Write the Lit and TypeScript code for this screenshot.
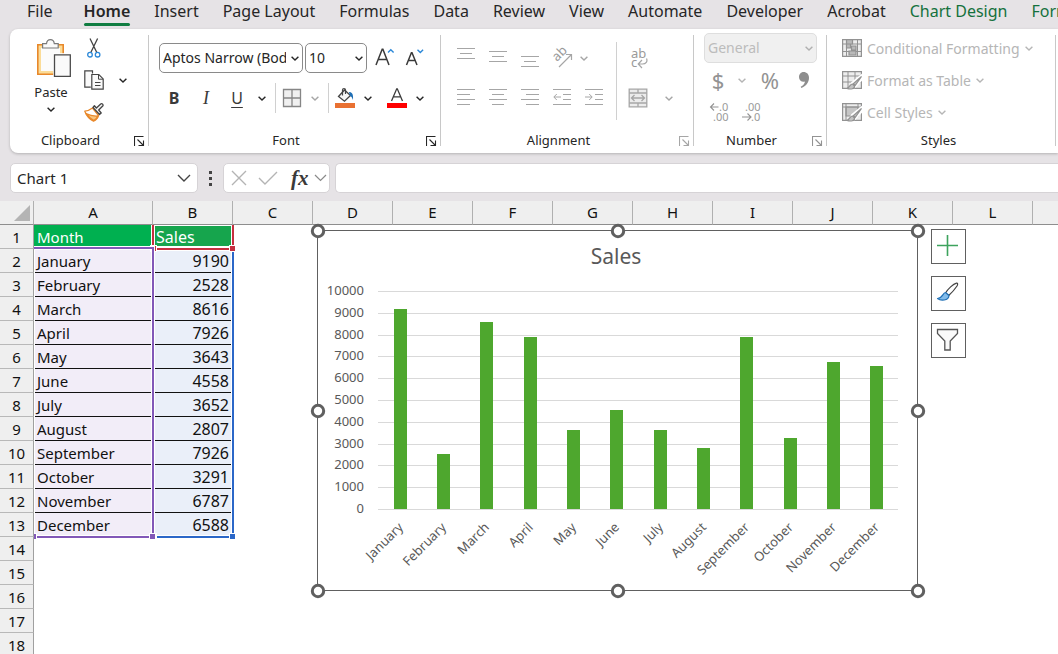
import { LitElement, html, svg, css, nothing } from "lit";
import { customElement } from "lit/decorators.js";

const SALES: [string, number][] = [
  ["January", 9190],
  ["February", 2528],
  ["March", 8616],
  ["April", 7926],
  ["May", 3643],
  ["June", 4558],
  ["July", 3652],
  ["August", 2807],
  ["September", 7926],
  ["October", 3291],
  ["November", 6787],
  ["December", 6588],
];

const base = css`
  * {
    box-sizing: border-box;
  }
  :host {
    display: block;
    font-family: "Noto Sans", "Open Sans", sans-serif;
    color: #262626;
  }
  button {
    font: inherit;
    color: inherit;
    background: none;
    border: 0;
    padding: 0;
    margin: 0;
    display: flex;
    align-items: center;
    justify-content: center;
  }
  svg {
    display: block;
    flex: none;
  }
`;

const chevron = () => svg`
  <svg width="8" height="5" viewBox="0 0 8 5" fill="none" stroke="currentColor" stroke-width="1.4">
    <path d="M.6 .7 4 4 7.4 .7"/>
  </svg>`;

const drop = (label: string, disabled = false) => html`
  <button class="drop" aria-label=${label} ?disabled=${disabled}>${chevron()}</button>`;

const lines = (rows: [number, number, number][]) => html`
  <svg width="18" height="20" viewBox="0 0 18 20" stroke="currentColor" stroke-width="1">
    ${rows.map(([x1, x2, y]) => svg`<path d="M${x1} ${y}.5H${x2}"/>`)}
  </svg>`;

const icons = {
  paste: html`
    <svg width="34" height="38" viewBox="0 0 34 38">
      <path d="M.8 5.8h25.4v29.4H.8z" fill="#fbdc98" stroke="#e8882a" stroke-width="1.6"/>
      <path d="M4 9h19v23H4z" fill="#fbfbfb"/>
      <path d="M5.6 9V4.6h3.9C9.8 2 11.3.6 13.4.6s3.6 1.4 3.9 4h3.9V9z" fill="#fafafa" stroke="#7a7a7a" stroke-width="1.2"/>
      <path d="M16.2 14.2h18v24h-18z" fill="#fff"/>
      <path d="M17.5 15.8h15.8v21.5H17.5z" fill="#fafafa" stroke="#4a4a4a" stroke-width="1.3"/>
    </svg>`,
  cut: html`
    <svg width="20" height="20" viewBox="0 0 20 20" fill="none" stroke-width="1.3">
      <path d="M6 .5l6.8 14M13.6 .5l-6.8 14" stroke="#444"/>
      <circle cx="6" cy="16.7" r="2.3" stroke="#2b88d8"/>
      <circle cx="13.6" cy="16.7" r="2.3" stroke="#2b88d8"/>
    </svg>`,
  copy: html`
    <svg width="20" height="20" viewBox="0 0 20 20" fill="#fafafa" stroke="#444" stroke-width="1.2">
      <path d="M8.5 3.5V.8H.8v16.4h6"/>
      <path d="M7.8 4.5h7l4.4 4.4v10.3H7.8z"/>
      <path d="M14.5 4.7v4.5h4.5M11 12.5h5.5M11 15.5h5.5" fill="none" stroke-width="1"/>
    </svg>`,
  painter: html`
    <svg width="20" height="20" viewBox="0 0 20 20" stroke-width="1.3" stroke-linejoin="round">
      <path d="M8.5 6C6.5 7.5 4 9 .8 9.2c1.7 4.5 4.7 8 8.7 9.9 2.6-1.2 4.4-3.4 5-5.6z" fill="#fff" stroke="#e8882a"/>
      <path d="M2 11.5c2.500 3 5 5.700 7.800 7 2-1 3.500-2.800 4-4.500-4 .3-8-.5-11.800-2.500z" fill="#f7c47e" stroke="#e8882a"/>
      <path d="M9 5.500l6.500 7 1.700-1.500-2.500-3 4-4c1-1.200-.6-3-2-2l-4.300 4-2-2.300z" fill="#f3f3f3" stroke="#444"/>
    </svg>`,
  grow: html`
    <svg width="20" height="20" viewBox="0 0 20 20" fill="none">
      <path d="M1 17 7.200 1.300h.7L14 17M3.200 11.500h8.700" stroke="#3a3a3a" stroke-width="1.5"/>
      <path d="M13 4.500l2.800-2.800 2.800 2.800" stroke="#2b88d8" stroke-width="1.4"/>
    </svg>`,
  shrink: html`
    <svg width="20" height="20" viewBox="0 0 20 20" fill="none">
      <path d="M1.500 17 6.400 4.800h.6L12 17M3.400 12.600h6.800" stroke="#3a3a3a" stroke-width="1.5"/>
      <path d="M12.500 1.700l2.800 2.800 2.800-2.800" stroke="#2b88d8" stroke-width="1.4"/>
    </svg>`,
  borders: html`
    <svg width="20" height="20" viewBox="0 0 20 20">
      <path d="M1.500 1.500h17v17h-17zM10 1.500v17M1.500 10h17" fill="#f0f0f0" stroke="#868686" stroke-width="1.3"/>
    </svg>`,
  fill: html`
    <svg width="20" height="20" viewBox="0 0 20 20" fill="none">
      <path d="M3.500 8.500 9.500 2l6 5.500-6 5.700z" fill="#f6f6f6" stroke="#444" stroke-width="1.3"/>
      <path d="M7.500 7.500V2c0-1.800 3-1.800 3 0v4" stroke="#444" stroke-width="1.2"/>
      <path d="M14 4c3 0 4.500 2 4 8-.9-2.500-1.500-3.500-3-4z" fill="#1f6fb5"/>
      <path d="M0 15h20v5H0z" fill="#e97132"/>
    </svg>`,
  fontColor: html`
    <svg width="20" height="20" viewBox="0 0 20 20" fill="none">
      <path d="M4.500 13 9.700 .8h.6L15.500 13M6.500 8.800h7" stroke="#3a3a3a" stroke-width="1.3"/>
      <path d="M0 15h20v5H0z" fill="#f00"/>
    </svg>`,
  orientation: html`
    <svg width="22" height="22" viewBox="0 0 22 22" fill="none" stroke="currentColor" stroke-width="1.2">
      <text class="glyph" transform="translate(6 15) rotate(-45)" font-size="13">ab</text>
      <path d="M8 20 20 8M15 7.500h5.500V13"/>
    </svg>`,
  wrap: html`
    <svg width="20" height="22" viewBox="0 0 20 22" fill="none" stroke="currentColor" stroke-width="1.2">
      <text class="glyph" x="3" y="11" font-size="13">ab</text>
      <text class="glyph" x="3" y="20" font-size="13">c</text>
      <path d="M18.500 11.500c1.300 3-.5 5.500-4 5.500H11M14 13 10.200 17l3.800 4"/>
    </svg>`,
  outdent: html`
    <svg width="20" height="20" viewBox="0 0 20 20" fill="none" stroke="currentColor">
      <path d="M1 1.500h18M11 6.500h8M11 11.500h8M1 16.500h18"/>
      <path d="M9 9H2M4.800 6 1.800 9l3 3"/>
    </svg>`,
  indent: html`
    <svg width="20" height="20" viewBox="0 0 20 20" fill="none" stroke="currentColor">
      <path d="M1 1.500h18M11 6.500h8M11 11.500h8M1 16.500h18"/>
      <path d="M1 9h7M5.200 6l3 3-3 3"/>
    </svg>`,
  merge: html`
    <svg width="20" height="20" viewBox="0 0 20 20" fill="none" stroke="currentColor" stroke-width="1.3">
      <path d="M1.200 1.200h17.600v17.600H1.200z" fill="#ececec"/>
      <path d="M1.200 5h17.600M1.200 15h17.600M10 1.200V5M10 15v3.800"/>
      <path d="M3.500 10h13M6.500 7l-3 3 3 3M13.500 7l3 3-3 3"/>
    </svg>`,
  comma: html`
    <svg width="12" height="18" viewBox="0 0 12 18">
      <path d="M5.500 1C8.800 1 11 3.300 11 6.800c0 4.700-3 8.600-7.700 10.200l-.6-1.200c2.500-1.200 4-3 4.300-5.200-3.300.8-6-1.200-6-4.400C1 3.200 3 1 5.500 1z" fill="#8e8e8e"/>
    </svg>`,
  moreDecimals: html`
    <svg width="22" height="22" viewBox="0 0 22 22" fill="none" stroke="currentColor" stroke-width="1.1">
      <text class="glyph" x="10" y="10" font-size="11">.0</text>
      <text class="glyph" x="4" y="20" font-size="11">.00</text>
      <path d="M9.500 6H1.500M5 2.500 1.500 6 5 9.500"/>
    </svg>`,
  fewerDecimals: html`
    <svg width="22" height="22" viewBox="0 0 22 22" fill="none" stroke="currentColor" stroke-width="1.1">
      <text class="glyph" x="4" y="10" font-size="11">.00</text>
      <text class="glyph" x="10" y="20" font-size="11">.0</text>
      <path d="M1 16h9M6.500 12.500 10 16l-3.500 3.500"/>
    </svg>`,
  conditional: html`
    <svg width="20" height="20" viewBox="0 0 20 20" fill="none" stroke="#929292" stroke-width="1.2">
      <path d="M.6 1.600h18.800v16.800H.6z" fill="#ededed"/>
      <path d="M.6 6h18.800M.6 13.500h18.800M4.500 1.600v16.800M15.500 1.600v16.800" stroke-width="1"/>
      <path d="M4.500 1.600h6V6h-6zM4.500 6h4v4h-4zM9.500 8h4.500v4H9.500zM7 13h7v4H7z" fill="#b9b9b9"/>
    </svg>`,
  tableFormat: html`
    <svg width="20" height="20" viewBox="0 0 20 20" fill="none" stroke="#929292" stroke-width="1.2">
      <path d="M.6 1.600h18.800v16.800H.6z" fill="#ededed"/>
      <path d="M.6 6h18.800M.6 12h18.800M6 1.600v16.800M13 1.600v16.800" stroke-width="1"/>
      <path d="M20.500 4.500 10 13l-3 6.500 6-2.500 8-9z" fill="#fff" stroke="#fff" stroke-width="2"/>
      <path d="M19.500 6.500 11.500 13.500l1.800 1.800zM10.500 14c-2.500 0-2.500 3-5.500 4.500 3.500 1 8 .5 7.500-2.500z" fill="#c4c4c4"/>
    </svg>`,
  cellStyles: html`
    <svg width="20" height="20" viewBox="0 0 20 20" fill="none" stroke="#929292" stroke-width="1.2">
      <path d="M.6 1.600h18.800v16.800H.6z" fill="#ededed"/>
      <path d="M4 5h12v9H4z" fill="#c6c6c6"/>
      <path d="M.6 5h18.800M4 1.600v16.800M16 1.600v5" stroke-width="1"/>
      <path d="M20.500 4.500 10 13l-3 6.500 6-2.500 8-9z" fill="#fff" stroke="#fff" stroke-width="2"/>
      <path d="M19.500 6.500 11.500 13.500l1.800 1.800zM10.500 14c-2.500 0-2.500 3-5.500 4.500 3.500 1 8 .5 7.500-2.500z" fill="#c4c4c4"/>
    </svg>`,
  launcher: html`
    <svg width="11" height="11" viewBox="0 0 11 11" fill="none" stroke="currentColor" stroke-width="1.1">
      <path d="M.5 10V.5h9M3.500 3.500 9 9M9.500 4.500v5h-5"/>
    </svg>`,
};

@customElement("ribbon-bar")
export class RibbonBar extends LitElement {
  static styles = [
    base,
    css`
      .tabs {
        display: flex;
        gap: 24px;
        height: 29px;
        padding-left: 27px;
        overflow: hidden;
        font-size: 16px;
        line-height: 22px;
      }
      .tab {
        flex: none;
        flex-direction: column;
        justify-content: flex-start;
        align-items: stretch;
        white-space: nowrap;
      }
      .tab.active {
        margin-left: 7px;
        font-weight: 600;
      }
      .tab.active::after {
        content: "";
        height: 3px;
        margin-top: 1px;
        border-radius: 2px;
        background: #107c41;
      }
      .tab.context {
        color: #14713d;
      }
      .panel {
        display: flex;
        margin-left: 10px;
        padding: 3px 0 5px;
        background: #fff;
        border-radius: 8px 0 0 8px;
        box-shadow: 0 1px 3px #00000038;
      }
      .group {
        flex: none;
        display: flex;
        flex-direction: column;
        gap: 4px;
      }
      .divider {
        flex: none;
        width: 1px;
        margin: 3px 0 2px;
        background: #c8c8c8;
      }
      .body {
        height: 96px;
      }
      .foot {
        display: flex;
        align-items: center;
        height: 16px;
        padding-right: 3px;
        font-size: 13px;
        line-height: 16px;
      }
      .foot span {
        flex: 1;
        padding-right: 2px;
        text-align: center;
      }
      .launch {
        width: 12px;
        height: 14px;
        align-self: flex-end;
      }
      button:disabled {
        color: #a6a6a6;
      }
      .drop {
        flex: none;
        width: 20px;
        height: 30px;
      }
      .tool {
        flex: none;
        width: 32px;
        height: 30px;
      }
      .tool.mid {
        width: 30px;
      }
      .tool.narrow {
        width: 26px;
      }
      .row {
        display: flex;
        align-items: center;
      }
      .bar {
        width: 1px;
        height: 30px;
        margin: 0 3px;
        background: #d0d0d0;
      }
      .glyph {
        font-family: "Noto Sans", sans-serif;
        fill: #9a9a9a;
        stroke: none;
      }

      .clipboard {
        width: 138px;
      }
      .clipboard .body {
        display: flex;
        gap: 10px;
        padding-left: 22px;
      }
      .paste {
        width: 38px;
        flex-direction: column;
        justify-content: flex-start;
        padding-top: 7px;
        font-size: 13px;
        line-height: 30px;
      }
      .paste svg:first-child {
        margin-left: 6px;
      }
      .stack {
        display: grid;
        grid-template-columns: 28px 30px;
        grid-template-rows: repeat(3, 32px);
        align-items: center;
        justify-items: center;
      }
      .stack .tool {
        width: 28px;
        grid-column: 1;
      }

      .font {
        width: 291px;
      }
      .font .body,
      .alignment .body {
        padding: 6px 9px 0;
      }
      .font .row {
        height: 40px;
      }
      .select {
        position: relative;
        display: block;
        flex: none;
      }
      .select select {
        appearance: none;
        display: block;
        width: 100%;
        height: 30px;
        padding: 0 16px 0 3px;
        font: 14px/28px "Noto Sans", sans-serif;
        color: #262626;
        background: #fff;
        border: 1px solid #8a8a8a;
        border-radius: 5px;
      }
      .select svg {
        position: absolute;
        right: 4px;
        top: 13px;
        pointer-events: none;
      }
      .family {
        width: 144px;
        margin: 0 2px 0 1px;
      }
      .size {
        width: 62px;
        margin-right: 5px;
      }
      .general {
        width: 113px;
        color: #b0b0b0;
      }
      .general select:disabled {
        color: #bcbcbc;
        background: #f0f0f0;
        border-color: #dedede;
        opacity: 1;
      }
      .bold,
      .italic,
      .underline {
        color: #3a3a3a;
      }
      .bold {
        font-weight: 700;
      }
      .italic {
        font-family: "Liberation Serif", serif;
        font-style: italic;
        font-size: 18px;
      }
      .underline {
        text-decoration: underline;
        text-underline-offset: 3px;
      }
      .text {
        font-size: 16px;
        line-height: 28px;
      }
      .gap {
        width: 6px;
      }

      .alignment {
        width: 252px;
      }
      .alignment .body {
        display: flex;
      }
      .aligns {
        display: grid;
        grid-template-columns: repeat(5, 32px);
        grid-template-rows: 40px 40px;
        align-items: center;
      }
      .aligns .drop {
        width: 12px;
      }
      .tall {
        height: 78px;
        margin: 4px 5px 0 6px;
      }
      .merges {
        display: grid;
        grid-template-columns: 32px 30px;
        grid-template-rows: 40px 40px;
        align-items: center;
        justify-items: center;
      }
      .merges .drop {
        grid-column: 2;
      }

      .number {
        width: 132px;
      }
      .number .body {
        padding-left: 10px;
      }
      .number .row {
        height: 32px;
      }
      .dollar,
      .percent {
        font-size: 22px;
        line-height: 30px;
      }
      .dollar {
        width: 28px;
      }
      .percent {
        width: 36px;
      }
      .number button:disabled {
        color: #939393;
      }
      .number .drop:disabled {
        color: #b4b4b4;
      }

      .styles {
        width: 228px;
      }
      .styles .body {
        padding-left: 15px;
      }
      .style {
        height: 32px;
        gap: 5px;
        font-size: 14px;
        white-space: nowrap;
      }
      .styles button:disabled {
        color: #b6b6b6;
      }
    `,
  ];

  private foot(label: string, launcher: "on" | "off" | "none") {
    return html`<div class="foot">
      <span>${label}</span>
      ${launcher === "none"
        ? nothing
        : html`<button class="launch" aria-label="${label} settings" ?disabled=${launcher === "off"}>${icons.launcher}</button>`}
    </div>`;
  }

  private tool(label: string, icon: unknown, disabled = false, cls = "") {
    return html`<button class="tool ${cls}" aria-label=${label} ?disabled=${disabled}>${icon}</button>`;
  }

  render() {
    const tabs = ["File", "Home", "Insert", "Page Layout", "Formulas", "Data", "Review", "View", "Automate", "Developer", "Acrobat", "Chart Design", "Format"];
    return html`
      <nav class="tabs">
        ${tabs.map((t) => html`<button class="tab ${t === "Home" ? "active" : ""} ${t === "Chart Design" || t === "Format" ? "context" : ""}">${t}</button>`)}
      </nav>
      <div class="panel">
        <section class="group clipboard">
          <div class="body">
            <button class="paste">${icons.paste}<span>Paste</span>${chevron()}</button>
            <div class="stack">
              ${this.tool("Cut", icons.cut)} ${this.tool("Copy", icons.copy)} ${drop("Copy options")}
              ${this.tool("Format Painter", icons.painter)}
            </div>
          </div>
          ${this.foot("Clipboard", "on")}
        </section>
        <div class="divider"></div>

        <section class="group font">
          <div class="body">
            <div class="row">
              <label class="select family"><select aria-label="Font name"><option>Aptos Narrow (Body)</option></select>${chevron()}</label>
              <label class="select size"><select aria-label="Font size"><option>10</option></select>${chevron()}</label>
              ${this.tool("Increase font size", icons.grow, false, "narrow")}
              <span class="gap"></span>
              ${this.tool("Decrease font size", icons.shrink, false)}
            </div>
            <div class="row text">
              ${this.tool("Bold", html`<span class="bold">B</span>`)}
              ${this.tool("Italic", html`<span class="italic">I</span>`)}
              ${this.tool("Underline", html`<span class="underline">U</span>`, false, "mid")}
              ${drop("Underline options")}
              <span class="bar"></span>
              ${this.tool("Borders", icons.borders, false, "narrow")} ${drop("Border options", true)}
              <span class="bar"></span>
              ${this.tool("Fill color", icons.fill, false, "narrow")} ${drop("Fill options")}
              <span class="gap"></span>
              ${this.tool("Font color", icons.fontColor, false, "narrow")} ${drop("Font color options")}
            </div>
          </div>
          ${this.foot("Font", "on")}
        </section>
        <div class="divider"></div>

        <section class="group alignment">
          <div class="body">
            <div class="aligns">
              ${this.tool("Top align", lines([[0, 18, 0], [3, 15, 5], [0, 18, 10]]), true)}
              ${this.tool("Middle align", lines([[0, 18, 3], [3, 15, 8], [0, 18, 13]]), true)}
              ${this.tool("Bottom align", lines([[0, 18, 8], [3, 15, 13], [0, 18, 18]]), true)}
              ${this.tool("Orientation", icons.orientation, true)} ${drop("Orientation options", true)}
              ${this.tool("Align left", lines([[0, 18, 1], [0, 13, 6], [0, 18, 11], [0, 13, 16]]), true)}
              ${this.tool("Center", lines([[0, 18, 1], [3, 15, 6], [0, 18, 11], [3, 15, 16]]), true)}
              ${this.tool("Align right", lines([[0, 18, 1], [5, 18, 6], [0, 18, 11], [5, 18, 16]]), true)}
              ${this.tool("Decrease indent", icons.outdent, true)} ${this.tool("Increase indent", icons.indent, true)}
            </div>
            <span class="bar tall"></span>
            <div class="merges">
              ${this.tool("Wrap text", icons.wrap, true)}<span></span>
              ${this.tool("Merge and center", icons.merge, true)} ${drop("Merge options", true)}
            </div>
          </div>
          ${this.foot("Alignment", "off")}
        </section>
        <div class="divider"></div>

        <section class="group number">
          <div class="body">
            <div class="row">
              <label class="select general"><select aria-label="Number format" disabled><option>General</option></select>${chevron()}</label>
            </div>
            <div class="row">
              <button class="dollar" aria-label="Accounting format" disabled>$</button>${drop("Currency options", true)}
              <button class="percent" aria-label="Percent style" disabled>%</button>
              ${this.tool("Comma style", icons.comma, true)}
            </div>
            <div class="row">
              ${this.tool("Increase decimal", icons.moreDecimals, true)} ${this.tool("Decrease decimal", icons.fewerDecimals, true)}
            </div>
          </div>
          ${this.foot("Number", "off")}
        </section>
        <div class="divider"></div>

        <section class="group styles">
          <div class="body">
            <button class="style" disabled>${icons.conditional}<span>Conditional Formatting</span>${chevron()}</button>
            <button class="style" disabled>${icons.tableFormat}<span>Format as Table</span>${chevron()}</button>
            <button class="style" disabled>${icons.cellStyles}<span>Cell Styles</span>${chevron()}</button>
          </div>
          ${this.foot("Styles", "none")}
        </section>
        <div class="divider"></div>
      </div>
    `;
  }
}

@customElement("formula-bar")
export class FormulaBar extends LitElement {
  static styles = [
    base,
    css`
      :host {
        display: flex;
        padding: 10px 0 8px 10px;
      }
      .box {
        display: flex;
        align-items: center;
        height: 30px;
        background: #fff;
        border: 1px solid #d6d3d6;
        border-radius: 5px;
      }
      .name {
        width: 188px;
      }
      input {
        flex: 1;
        min-width: 0;
        height: 28px;
        padding: 0 6px;
        border: 0;
        background: none;
        font: 15px/28px "Noto Sans", sans-serif;
        color: #262626;
      }
      .open {
        width: 26px;
        height: 28px;
      }
      .dots {
        width: 25px;
        height: 30px;
      }
      .actions {
        width: 107px;
        padding: 0 2px 0 6px;
      }
      .fx {
        margin: 0 5px 0 13px;
        font: italic 700 21px/28px "Liberation Serif", serif;
        color: #3a3a3a;
      }
      .enter {
        margin-left: 10px;
      }
      .content {
        flex: 1;
        margin-left: 5px;
        border-right: 0;
        border-radius: 5px 0 0 5px;
      }
    `,
  ];

  render() {
    return html`
      <div class="box name">
        <input aria-label="Name box" value="Chart 1" />
        <button class="open" aria-label="Show names">
          <svg width="14" height="8" viewBox="0 0 14 8" fill="none" stroke="#444" stroke-width="1.4"><path d="M1 1l6 6 6-6"/></svg>
        </button>
      </div>
      <span class="dots">
        <svg width="25" height="30" viewBox="0 0 25 30" fill="#444"><path d="M11 8h3v3h-3zM11 14h3v3h-3zM11 20h3v3h-3z"/></svg>
      </span>
      <div class="box actions">
        <button aria-label="Cancel" disabled>
          <svg width="18" height="18" viewBox="0 0 18 18" fill="none" stroke="#b4b4b4" stroke-width="1.4"><path d="M2 2l14 14M16 2 2 16"/></svg>
        </button>
        <button class="enter" aria-label="Enter" disabled>
          <svg width="20" height="18" viewBox="0 0 20 18" fill="none" stroke="#b4b4b4" stroke-width="1.4"><path d="M1 9l6 6L19 3"/></svg>
        </button>
        <button class="fx" aria-label="Insert function">fx</button>
        <button aria-label="Function options">
          <svg width="13" height="8" viewBox="0 0 13 8" fill="none" stroke="#8a8a8a" stroke-width="1.2"><path d="M1 1l5.500 5.500L12 1"/></svg>
        </button>
      </div>
      <div class="box content"><input aria-label="Formula" /></div>
    `;
  }
}

@customElement("sales-chart")
export class SalesChart extends LitElement {
  static styles = [
    base,
    css`
      svg {
        overflow: visible;
        font-family: "Noto Sans", sans-serif;
        fill: #595959;
      }
      .area {
        fill: #fff;
        stroke: #606060;
      }
      .title {
        font-size: 21px;
        text-anchor: middle;
      }
      .label {
        font-size: 13px;
        text-anchor: end;
      }
      .grid {
        stroke: #d9d9d9;
      }
      .column {
        fill: #4ea72e;
      }
      .handle {
        fill: #fff;
        stroke: #606060;
        stroke-width: 3;
      }
    `,
  ];

  render() {
    const left = 60;
    const width = 520;
    const zero = 278;
    const height = 218;
    const step = width / SALES.length;
    const y = (v: number) => zero - (v / 10000) * height;
    const ticks = Array.from({ length: 11 }, (_, i) => i * 1000);
    const handles = [[0, 0], [300, 0], [600, 0], [0, 180], [600, 180], [0, 360], [300, 360], [600, 360]];
    return html`
      <svg width="600" height="360" viewBox="0 0 600 360" role="img" aria-label="Sales by month">
        <rect class="area" x="-.5" y="-.5" width="600" height="360"></rect>
        <text class="title" x="298" y="33">Sales</text>
        ${ticks.map((t) => svg`
          <path class="grid" d="M${left} ${Math.round(y(t)) + 0.5}h${width}"/>
          <text class="label" x="46" y=${Math.round(y(t)) + 4}>${t}</text>`)}
        ${SALES.map(([month, value], i) => {
          const cx = left + step * (i + 0.5);
          const top = Math.ceil(y(value));
          return svg`
            <rect class="column" x=${Math.round(cx - 6)} y=${top} width="13" height=${zero - top}></rect>
            <text class="label" transform="translate(${Math.round(cx + 4)} 297) rotate(-45)">${month}</text>`;
        })}
        ${handles.map(([hx, hy]) => svg`<circle class="handle" cx=${hx} cy=${hy} r="5.7"/>`)}
      </svg>
    `;
  }
}

@customElement("sheet-grid")
export class SheetGrid extends LitElement {
  static styles = [
    base,
    css`
      :host {
        position: relative;
        overflow: hidden;
        background: #fff;
      }
      table {
        table-layout: fixed;
        width: 0;
        border-collapse: separate;
        border-spacing: 0;
        font-size: 15px;
        line-height: 22px;
        color: #111;
      }
      .rows {
        width: 34px;
      }
      .wide {
        width: 119px;
      }
      .std {
        width: 80px;
      }
      th,
      td {
        padding: 0;
        height: 24px;
        font-weight: 400;
        white-space: nowrap;
        vertical-align: top;
      }
      tbody th,
      tbody td {
        padding-top: 1px;
      }
      th {
        background: #efefef;
        border-right: 1px solid #a0a0a0;
        border-bottom: 1px solid #b8b8b8;
        text-align: center;
      }
      thead th {
        border-right-color: #b0b0b0;
        border-bottom-color: #8e8e8e;
      }
      .corner svg {
        margin: 4px 0 0 14px;
      }
      td.month,
      td.value {
        border-bottom: 1px solid #111;
      }
      .month {
        padding-left: 3px;
        background: #f2edf8;
      }
      .value {
        padding-right: 4px;
        font-size: 16px;
        text-align: right;
        background: #eaeff9;
      }
      .head {
        padding-left: 3px;
        color: #fff;
        background: #00b050;
      }
      .head.sales {
        font-size: 16px;
        background: #16a54d;
      }
      .range {
        position: absolute;
        top: 46px;
        height: 291px;
        border: 2px solid;
        outline: 1px solid #fff;
        box-shadow: inset 0 0 0 1px #fff;
      }
      .range::before,
      .range::after {
        content: "";
        position: absolute;
        bottom: -3px;
        width: 5px;
        height: 5px;
        background: currentColor;
        outline: 1px solid #fff;
      }
      .range::before {
        left: -3px;
      }
      .range::after {
        right: -3px;
      }
      .values {
        left: 152px;
        width: 82px;
        border-top: 0;
        color: #2b67c8;
      }
      .series {
        left: 152px;
        width: 82px;
        top: 24px;
        height: 25px;
        border-top: 0;
        color: #c5303f;
        clip-path: inset(0 -4px -4px -4px);
      }
      .months {
        left: 34px;
        width: 120px;
        border-left: 0;
        color: #8258b8;
        clip-path: inset(-4px -4px -4px 0);
      }
      sales-chart {
        position: absolute;
        left: 318px;
        top: 30px;
      }
      .side {
        position: absolute;
        left: 931px;
        top: 28px;
        display: flex;
        flex-direction: column;
        gap: 12px;
      }
      .side button {
        width: 35px;
        height: 35px;
        padding: 0 2px 2px 0;
        background: #fff;
        border: 1px solid #606060;
      }
    `,
  ];

  render() {
    const columns = "ABCDEFGHIJKLMNOP".split("");
    const rows = Array.from({ length: 24 }, (_, i) => i + 1);
    const cells = (row: number) => {
      if (row === 1) return html`<td class="head">Month</td><td class="head sales">Sales</td>`;
      const entry = SALES[row - 2];
      return entry ? html`<td class="month">${entry[0]}</td><td class="value">${entry[1]}</td>` : html`<td></td><td></td>`;
    };
    return html`
      <table>
        <colgroup>
          <col class="rows" /><col class="wide" />${columns.slice(1).map(() => html`<col class="std" />`)}
        </colgroup>
        <thead>
          <tr>
            <th class="corner" aria-label="Select all"><svg width="16" height="16" viewBox="0 0 16 16"><path d="M16 0v16H0z" fill="#b4b4b4"/></svg></th>
            ${columns.map((c) => html`<th scope="col">${c}</th>`)}
          </tr>
        </thead>
        <tbody>
          ${rows.map((r) => html`<tr><th scope="row">${r}</th>${cells(r)}</tr>`)}
        </tbody>
      </table>
      <div class="range values"></div>
      <div class="range series"></div>
      <div class="range months"></div>
      <sales-chart></sales-chart>
      <div class="side">
        <button aria-label="Chart elements">
          <svg width="23" height="23" viewBox="0 0 23 23"><path d="M11.500 1v21M1 11.500h21" stroke="#3da35d" stroke-width="1.6"/></svg>
        </button>
        <button aria-label="Chart styles">
          <svg width="23" height="23" viewBox="0 0 23 23" stroke-width="1.2" stroke-linejoin="round">
            <path d="M9.500 12C12 8 17 3 20.500 2.200 22 2 21.800 3.500 21 5c-2 3-5 6.500-8.300 9.500z" fill="#fff" stroke="#444"/>
            <path d="M9.500 11.500c-3 .5-2.500 5.500-8 6 3 2.500 11 2.500 11.500-3z" fill="#83bcea" stroke="#1f6fb5"/>
          </svg>
        </button>
        <button aria-label="Chart filters">
          <svg width="23" height="23" viewBox="0 0 23 23"><path d="M1.500 1.500h20v4l-7.300 7.500v9h-5.400v-9L1.500 5.500z" fill="#fafafa" stroke="#555" stroke-width="1.3"/></svg>
        </button>
      </div>
    `;
  }
}

@customElement("app-root")
export class AppRoot extends LitElement {
  static styles = [
    base,
    css`
      :host {
        display: flex;
        flex-direction: column;
        height: 100vh;
        overflow: hidden;
        background: #e6e3e6;
      }
      sheet-grid {
        flex: 1;
        min-height: 0;
      }
    `,
  ];

  render() {
    return html`
      <ribbon-bar></ribbon-bar>
      <formula-bar></formula-bar>
      <sheet-grid></sheet-grid>
    `;
  }
}
